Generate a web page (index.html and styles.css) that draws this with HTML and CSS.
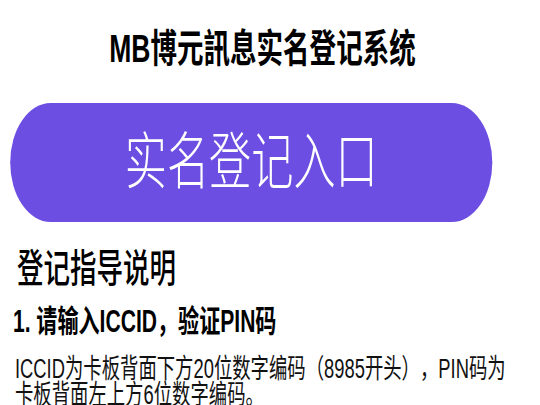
FILE: index.html
```html
<!DOCTYPE html>
<html lang="zh-CN">
<head>
<meta charset="utf-8">
<title>MB博元訊息实名登记系统</title>
<link rel="stylesheet" href="styles.css">
</head>
<body>
<div class="page">
  <h1 class="title">MB博元訊息实名登记系统</h1>
  <a class="entry" href="#">实名登记入口</a>
  <h2 class="guide">登记指导说明</h2>
  <h3 class="step">1. 请输入ICCID，验证PIN码</h3>
  <p class="desc">ICCID为卡板背面下方20位数字编码（8985开头），PIN码为卡板背面左上方6位数字编码。</p>
</div>
</body>
</html>
```
FILE: styles.css
```css
html, body {
  margin: 0;
  padding: 0;
  background: #ffffff;
  overflow: hidden;
}
.page {
  width: 794px;
  transform: scaleX(0.68);
  transform-origin: 0 0;
  font-family: "Liberation Sans", "Noto Sans CJK SC", sans-serif;
  color: #111111;
  text-spacing-trim: space-all;
}
.title {
  margin: 29px 0 0 0;
  padding-right: 22px;
  font-size: 39px;
  line-height: 39px;
  font-weight: bold;
  text-align: center;
  color: #000000;
}
.entry {
  display: flex;
  align-items: center;
  justify-content: center;
  margin: 35px 0 0 15px;
  width: 709px;
  height: 119px;
  border-radius: 60px;
  background: #6c4ee2;
  color: #ffffff;
  font-size: 62px;
  font-weight: 300;
  text-decoration: none;
  line-height: 1;
}
.guide {
  margin: 27px 0 0 25px;
  font-size: 39px;
  line-height: 39px;
  font-weight: 500;
  color: #000000;
}
.step {
  margin: 18px 0 0 19px;
  font-size: 31px;
  line-height: 31px;
  font-weight: bold;
  color: #000000;
}
.desc {
  margin: 19px 0 0 22px;
  width: 745px;
  font-size: 27px;
  line-height: 26px;
  color: #111111;
}
```
